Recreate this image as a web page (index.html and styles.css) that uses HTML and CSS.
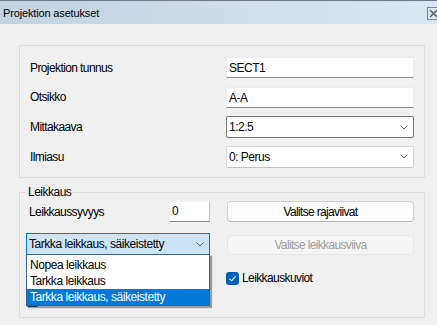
FILE: index.html
```html
<!DOCTYPE html>
<html lang="fi">
<head>
  <meta charset="UTF-8">
  <title>Projektion asetukset</title>
  <link rel="stylesheet" href="styles.css">
</head>
<body>

  <!-- Title bar -->
  <div class="titlebar">
    <span class="title">Projektion asetukset</span>
    <span class="close">
      <svg width="9" height="9" viewBox="0 0 9 9"><path d="M1 1 L8 8 M8 1 L1 8" stroke="#5b6778" stroke-width="1.6"/></svg>
    </span>
  </div>

  <div class="content">
    <!-- General settings -->
    <div class="group general">
      <span class="label">Projektion tunnus</span>
      <div class="textbox">SECT1</div>

      <span class="label">Otsikko</span>
      <div class="textbox low">A-A</div>

      <span class="label">Mittakaava</span>
      <div class="combo dark">
        <span>1:2.5</span>
        <svg class="chevron" width="8" height="5" viewBox="0 0 8 5"><polyline points="0.5,0.5 4,4 7.5,0.5" fill="none" stroke="#606060"/></svg>
      </div>

      <span class="label">Ilmiasu</span>
      <div class="combo">
        <span>0: Perus</span>
        <svg class="chevron" width="8" height="5" viewBox="0 0 8 5"><polyline points="0.5,0.5 4,4 7.5,0.5" fill="none" stroke="#606060"/></svg>
      </div>
    </div>

    <!-- Cut settings -->
    <fieldset class="group cut">
      <legend>Leikkaus</legend>
      <div class="cut-grid">
        <div class="depth-row">
          <span class="label">Leikkaussyvyys</span>
          <div class="textbox depth">0</div>
        </div>
        <div class="button">Valitse rajaviivat</div>

        <div class="combo-wrap">
          <div class="combo active">
            <span>Tarkka leikkaus, säikeistetty</span>
            <svg class="chevron" width="8" height="5" viewBox="0 0 8 5"><polyline points="0.5,0.5 4,4 7.5,0.5" fill="none" stroke="#606060"/></svg>
          </div>
          <ul class="dropdown">
            <li>Nopea leikkaus</li>
            <li>Tarkka leikkaus</li>
            <li class="selected">Tarkka leikkaus, säikeistetty</li>
          </ul>
        </div>
        <div class="button disabled">Valitse leikkausviiva</div>

        <div class="spacer"></div>
        <div class="check row3">
          <span class="box">
            <svg width="13" height="13" viewBox="0 0 13 13"><polyline points="3.5,6.8 5.6,8.8 9.6,4.4" fill="none" stroke="#fff" stroke-width="1.1"/></svg>
          </span>
          <span>Leikkauskuviot</span>
        </div>

        <!-- checkbox hidden under the open list -->
        <div class="check row4">
          <span class="box"></span>
        </div>
      </div>
    </fieldset>
  </div>

</body>
</html>
```

FILE: styles.css
```css
body {
  margin: 0;
  padding: 0;
  background-color: #f0f0f0;
  font-family: "Liberation Sans", Arial, sans-serif;
  font-size: 12px;
  color: #000;
  overflow: hidden;
}

* {
  box-sizing: border-box;
}

.titlebar {
  height: 24px;
  border-top: 1px solid #6f7a86;
  background: linear-gradient(to right, #c3d3e3, #dbe6f1);
  display: flex;
  align-items: center;
  justify-content: space-between;
  padding-left: 3px;
}

.title {
  font-size: 11px;
  letter-spacing: -0.15px;
}

.close {
  width: 13px;
  height: 13px;
  margin-right: -3px;
  margin-top: 2px;
  border: 1px solid #77879b;
  background-color: #dde7f1;
  display: flex;
  align-items: center;
  justify-content: center;
}

.content {
  padding: 21px 0 0 19px;
}

.group {
  width: 406px;
  border: 1px solid #dcdcdc;
}

.label {
  letter-spacing: -0.6px;
}

/* general group */
.general {
  display: grid;
  grid-template-columns: 1fr 188px;
  grid-template-rows: 21px 22px 22px 21px;
  row-gap: 8px;
  padding: 11px 10px 10px 10px;
  align-items: center;
}

.textbox {
  height: 21px;
  background-color: #fff;
  border: 1px solid #ebebeb;
  border-bottom-color: #8b8b8b;
  padding-left: 2px;
  display: flex;
  align-items: center;
  letter-spacing: -0.5px;
}

.textbox.low {
  align-self: end;
}

.combo {
  height: 22px;
  background-color: #fff;
  border: 1px solid #d6d6d6;
  border-bottom-color: #c2c2c2;
  border-radius: 2px;
  padding: 0 5px 0 2px;
  display: flex;
  align-items: center;
  justify-content: space-between;
  letter-spacing: -0.5px;
}

.combo.dark {
  border-color: #7a7a7a;
}

.combo.active {
  background-color: #cce4f7;
  border-color: #0078d7;
  border-radius: 0;
  letter-spacing: -0.45px;
}

/* cut group */
.cut {
  margin: 7px 0 0 0;
  padding: 1px 10px 7px 6px;
}

.cut legend {
  padding: 0 2px;
  line-height: 15px;
  letter-spacing: -0.5px;
}

.cut-grid {
  display: grid;
  grid-template-columns: 184px 187px;
  column-gap: 17px;
}

.depth-row {
  height: 21px;
  display: flex;
  align-items: center;
  justify-content: space-between;
  padding-left: 3px;
}

.textbox.depth {
  width: 41px;
  align-items: flex-start;
  padding-top: 2px;
  border-color: #f4f4f4;
  border-right-color: #c6c6c6;
  border-bottom-color: #8b8b8b;
}

.button {
  height: 21px;
  align-self: end;
  background-color: #fdfdfd;
  border: 1px solid #d0d0d0;
  border-bottom-color: #b4b4b4;
  border-radius: 4px;
  display: flex;
  align-items: center;
  justify-content: center;
  letter-spacing: -0.65px;
}

.button.disabled {
  height: 20px;
  margin-top: 13px;
  background-color: #f5f5f5;
  border-color: #e5e5e5;
  color: #9d9d9d;
}

.combo-wrap {
  position: relative;
  margin-top: 11px;
  z-index: 2;
}

.dropdown {
  position: absolute;
  top: 21px;
  left: 0;
  width: 184px;
  margin: 0;
  padding: 2px 0 0 0;
  list-style: none;
  background-color: #fff;
  border: 1px solid #34618f;
  box-shadow: 2px 2px 1px rgba(0, 0, 0, 0.35);
  letter-spacing: -0.45px;
}

.dropdown li {
  height: 16px;
  line-height: 16px;
  padding-left: 3px;
}

.dropdown li.selected {
  background-color: #0078d7;
  color: #fff;
}

.check {
  height: 20px;
  display: flex;
  align-items: center;
  gap: 3px;
  letter-spacing: -0.6px;
}

.check.row3 {
  margin-top: 13px;
  margin-left: -1px;
}

.check.row4 {
  margin-top: 2px;
}

.check .box {
  width: 13px;
  height: 13px;
  border-radius: 3px;
  background-color: #005fb8;
  display: flex;
}
```
